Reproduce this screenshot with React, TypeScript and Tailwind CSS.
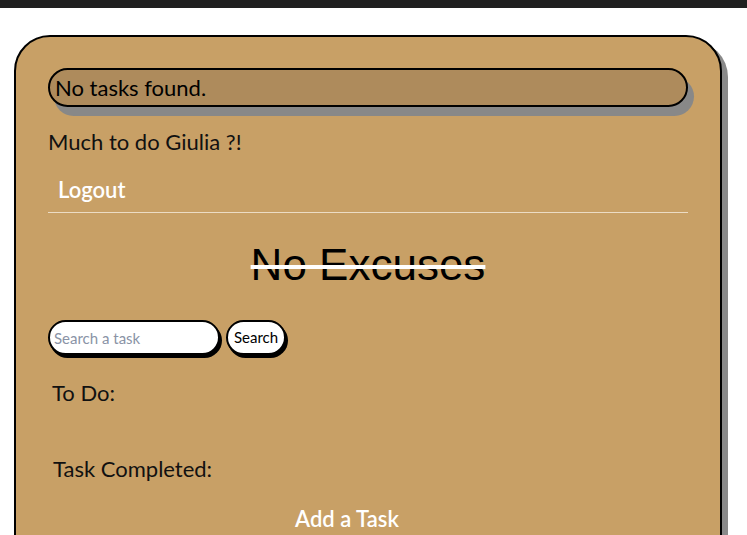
import React from "react";

const App = () => {
  return (
    <div className="h-[535px] bg-white font-['Lato',sans-serif] overflow-hidden">
      <div className="h-2 bg-[#202020]" />
      <div className="ml-[14px] mt-[27px] w-[708px] h-[600px] rounded-[36px] border-2 border-black bg-[#c8a066] shadow-[6px_6px_0_#8a8a8a] px-8 pt-[31px]">
        <div className="h-[39px] rounded-full border-2 border-black bg-[#ae8b5c] shadow-[6px_9px_0_#888888] flex items-center pl-[5px] text-[22px] text-black">
          No tasks found.
        </div>
        <p className="mt-[18px] text-[22px] text-[#111]">Much to do Giulia ?!</p>
        <div className="mt-[15px] border-b border-[#ecdcc4] pb-[6px] pl-[10px]">
          <span className="text-[22px] font-semibold text-white">Logout</span>
        </div>
        <h1 className="mt-[24px] text-center font-['Liberation_Sans',sans-serif] text-[44px] leading-[56px] text-black line-through decoration-white decoration-[4px]">
          No Excuses
        </h1>
        <div className="mt-[27px] flex items-center gap-[6px]">
          <input
            placeholder="Search a task"
            className="h-[35px] w-[172px] rounded-full border-2 border-black bg-white px-[4px] text-[15px] shadow-[2px_3px_0_#000] placeholder:text-[#8a93a6] outline-none"
          />
          <button className="h-[35px] rounded-full border-2 border-black bg-white px-[6px] text-[15px] text-black shadow-[2px_3px_0_#000]">
            Search
          </button>
        </div>
        <p className="mt-[21px] pl-[4px] text-[22px] text-[#111]">To Do:</p>
        <p className="mt-[43px] pl-[5px] text-[22px] text-[#111]">Task Completed:</p>
        <p className="mt-[17px] text-center text-[22px] font-semibold text-white pr-[42px]">Add a Task</p>
      </div>
    </div>
  );
};

export default App;
